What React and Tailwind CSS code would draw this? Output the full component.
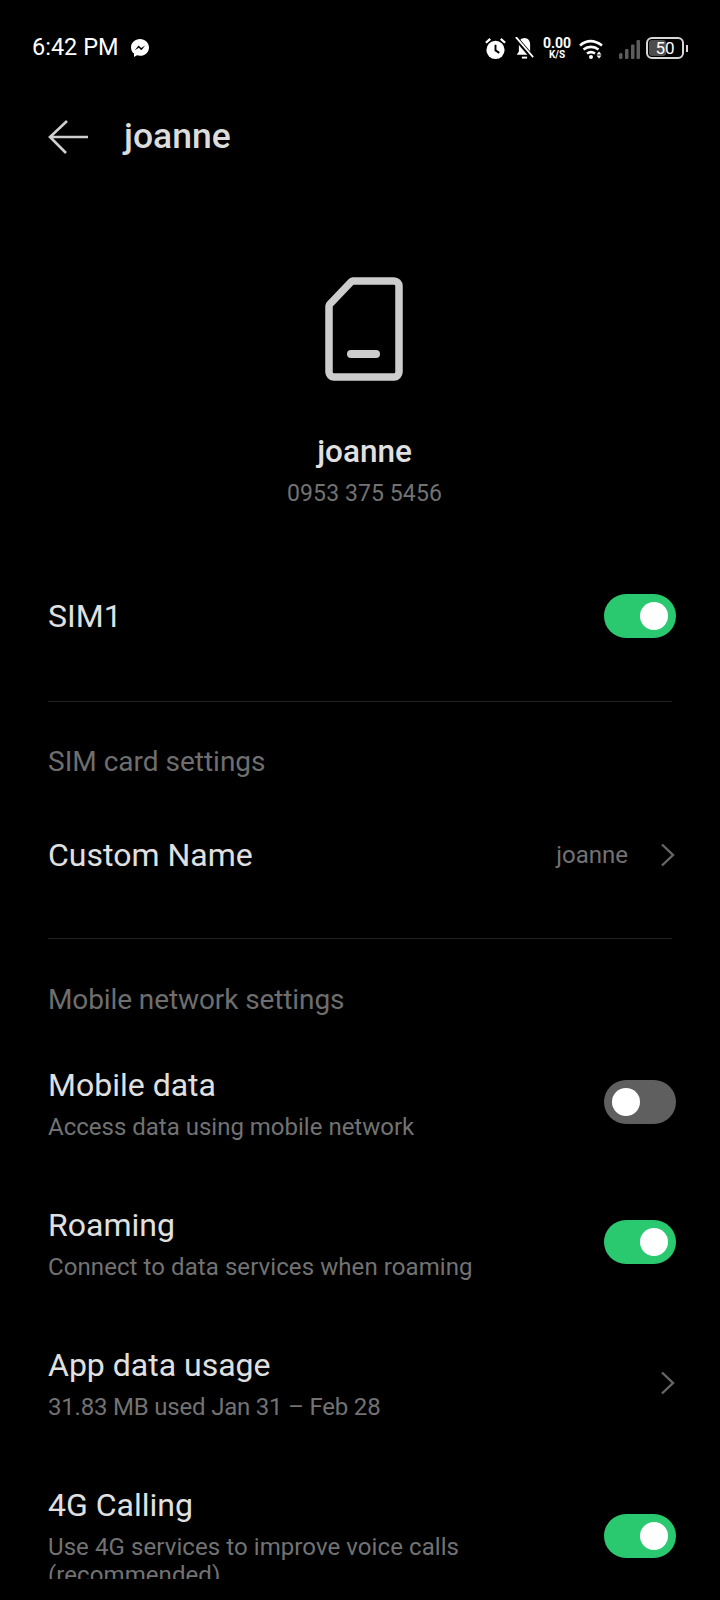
import React from "react";

const font = { fontFamily: "Roboto, sans-serif" };

function Toggle({ on, className = "" }) {
  return (
    <div className={`w-[72px] h-11 rounded-full flex items-center shrink-0 px-[8px] ${on ? "bg-[#2ac96f] justify-end" : "bg-[#5f5f5f] justify-start"} ${className}`}>
      <div className="w-7 h-7 rounded-full bg-white" />
    </div>
  );
}

function Chevron({ className = "" }) {
  return (
    <svg width="16" height="24" viewBox="0 0 16 24" fill="none" className={`shrink-0 ${className}`}>
      <path d="M2 1.500 L13 12 L2 22.500" stroke="#666" strokeWidth="2.400" />
    </svg>
  );
}

function Divider() {
  return <div className="h-px bg-[#222222] ml-12 mr-[48px]" />;
}

function Row2({ title, sub, sub2, right, subClass = "" }) {
  return (
    <div className="flex items-start justify-between pl-12 pr-[44px] h-[140px] pt-[31px]">
      <div>
        <div className="text-[32px] leading-[40px] text-[#e0e0e0]">{title}</div>
        <div className={`text-[24px] leading-[28px] mt-[8px] text-[#727272] ${subClass}`}>
          {sub}
          {sub2 && <br />}
          {sub2}
        </div>
      </div>
      {right}
    </div>
  );
}

export default function App() {
  return (
    <div className="w-[720px] h-[1600px] bg-black overflow-hidden" style={font}>
      <div className="h-[1579px] overflow-hidden">
        {/* status bar */}
        <div className="flex items-center justify-between h-[48px] mt-6 pl-[32px] pr-[32px]">
          <div className="flex items-center gap-3">
            <span className="text-[23.500px] text-white leading-none">6:42 PM</span>
            <svg width="20" height="20" viewBox="0 0 20 20">
              <path d="M10 1C5 1 1 4.700 1 9.400c0 2.600 1.200 4.700 3 6.200V19l3-1.700c1 .3 2 .4 3 .4 5 0 9-3.700 9-8.300S15 1 10 1z" fill="#fff" />
              <path d="M4.800 12.200 8.600 7.600l2.600 2.300 4-2.300-3.800 4.600-2.600-2.400z" fill="#000" />
            </svg>
          </div>
          <div className="flex items-center">
            <svg width="23" height="23" viewBox="0 0 24 24" className="mr-[8px]">
              <circle cx="12" cy="13.500" r="9.500" fill="#fff" />
              <path d="M12 8v6l4 2.500" stroke="#000" strokeWidth="2" fill="none" />
              <path d="M2 6l4.500-4M22 6l-4.500-4" stroke="#fff" strokeWidth="2.400" />
            </svg>
            <svg width="19" height="23" viewBox="0 0 22 24" className="mr-[9px]" preserveAspectRatio="none">
              <path d="M11 1c-4 0-6.500 3-6.500 6.500V15L2 18.500h18L17.500 15V7.500C17.500 4 15 1 11 1z" fill="#fff" />
              <path d="M8 20.500h6v2H8z" fill="#fff" />
              <path d="M1 1l19 20" stroke="#000" strokeWidth="5" />
              <path d="M1 0l20 21" stroke="#fff" strokeWidth="2" />
            </svg>
            <div className="flex flex-col items-center w-[28px] mr-[8px] text-white font-bold">
              <span className="text-[14px] leading-[14px]">0.00</span>
              <span className="text-[10px] leading-[10px]">K/S</span>
            </div>
            <svg width="24" height="20" viewBox="0 0 24 20" className="mr-[16px] mt-[2px]">
              <path d="M1 6.500C7.500 1 15.500 1 23 6.500" stroke="#fff" strokeWidth="2.600" fill="none" />
              <path d="M4.500 10.500c4.500-3.500 10.500-3.500 15 0" stroke="#fff" strokeWidth="2.600" fill="none" />
              <path d="M8 14.500c2.500-1.800 5.500-1.800 8 0" stroke="#fff" strokeWidth="2.600" fill="none" />
              <circle cx="12" cy="18" r="2" fill="#fff" />
              <path d="M20 12.500l2.500 3h-5zM20 19.500l2.500-3h-5z" fill="#fff" />
            </svg>
            <svg width="21" height="19" viewBox="0 0 21 19" className="mr-[6px] mt-[2px]">
              <rect x="0" y="13" width="3.500" height="6" rx="1.500" fill="#5c5c5c" />
              <rect x="6" y="9" width="3.500" height="10" rx="1" fill="#5c5c5c" />
              <rect x="12" y="4.500" width="3.500" height="14.500" rx="1" fill="#5c5c5c" />
              <rect x="17.500" y="0" width="3.500" height="19" rx="1" fill="#5c5c5c" />
            </svg>
            <div className="relative w-[38px] h-[22px] rounded-[6px] border-2 border-[#d8d8d8] overflow-hidden flex items-center justify-center">
              <div className="absolute left-[1px] top-[1px] bottom-[1px] w-[17px] bg-[#4d4d4d] rounded-[3px]" />
              <span className="relative text-[17px] leading-none text-white">50</span>
            </div>
            <div className="w-[2px] h-[7px] bg-[#d8d8d8] ml-[2px]" />
          </div>
        </div>

        {/* header */}
        <div className="flex items-center h-[64px] mt-[33px] pl-[48px]">
          <svg width="41" height="34" viewBox="0 0 41 34" fill="none">
            <path d="M40 17H2M19 1 2 17l16 16" stroke="#cfcfcf" strokeWidth="2.600" />
          </svg>
          <span className="ml-[35px] text-[35.500px] font-medium text-[#dcdcdc]">joanne</span>
        </div>

        {/* SIM */}
        <div className="flex flex-col items-center mt-[108px] pl-[9px]">
          <svg width="78" height="104" viewBox="0 0 78 104" fill="none" className="mr-[2px]">
            <path d="M28 4H69a5 5 0 0 1 5 5V95a5 5 0 0 1-5 5H9a5 5 0 0 1-5-5V29a3 3 0 0 1 1-2L26 5a3 3 0 0 1 2-1z" stroke="#cdcdcd" strokeWidth="7.500" strokeLinejoin="round" />
            <rect x="22" y="73" width="33" height="8" rx="4" fill="#cdcdcd" />
          </svg>
          <div className="mt-[51px] text-[31.500px] leading-[40px] font-medium text-[#e0e0e0]">joanne</div>
          <div className="mt-[4px] text-[23px] leading-[36px] tracking-[0.1px] text-[#727272]">0953 375 5456</div>
        </div>

        <div className="flex items-center justify-between pl-12 pr-[44px] h-[171px] mt-[18px]">
          <span className="text-[32px] text-[#e0e0e0]">SIM1</span>
          <Toggle on />
        </div>
        <Divider />
        <div className="pl-12 mt-[42px] text-[28px] leading-[36px] text-[#6e6e6e]">SIM card settings</div>
        <div className="flex items-center justify-between pl-12 pr-[44px] h-[96px] mt-[27px]">
          <span className="text-[32px] text-[#e0e0e0]">Custom Name</span>
          <div className="flex items-center gap-[32px]">
            <span className="text-[24px] text-[#727272]">joanne</span>
            <Chevron />
          </div>
        </div>
        <div className="mt-[35px]"><Divider /></div>
        <div className="pl-12 mt-[43px] text-[28px] leading-[36px] tracking-[-0.1px] text-[#6e6e6e]">Mobile network settings</div>
        <div className="mt-[16px]">
          <Row2 title="Mobile data" sub="Access data using mobile network" right={<Toggle className="mt-[15px]" />} />
          <Row2 title="Roaming" sub="Connect to data services when roaming" subClass="tracking-[0.08px]" right={<Toggle on className="mt-[15px]" />} />
          <Row2 title="App data usage" sub="31.83 MB used Jan 31 – Feb 28" subClass="tracking-[-0.2px]" right={<Chevron className="mt-[26px]" />} />
          <Row2 title="4G Calling" sub="Use 4G services to improve voice calls" sub2="(recommended)" subClass="tracking-[0.08px]" right={<Toggle on className="mt-[29px]" />} />
        </div>
      </div>
    </div>
  );
}
